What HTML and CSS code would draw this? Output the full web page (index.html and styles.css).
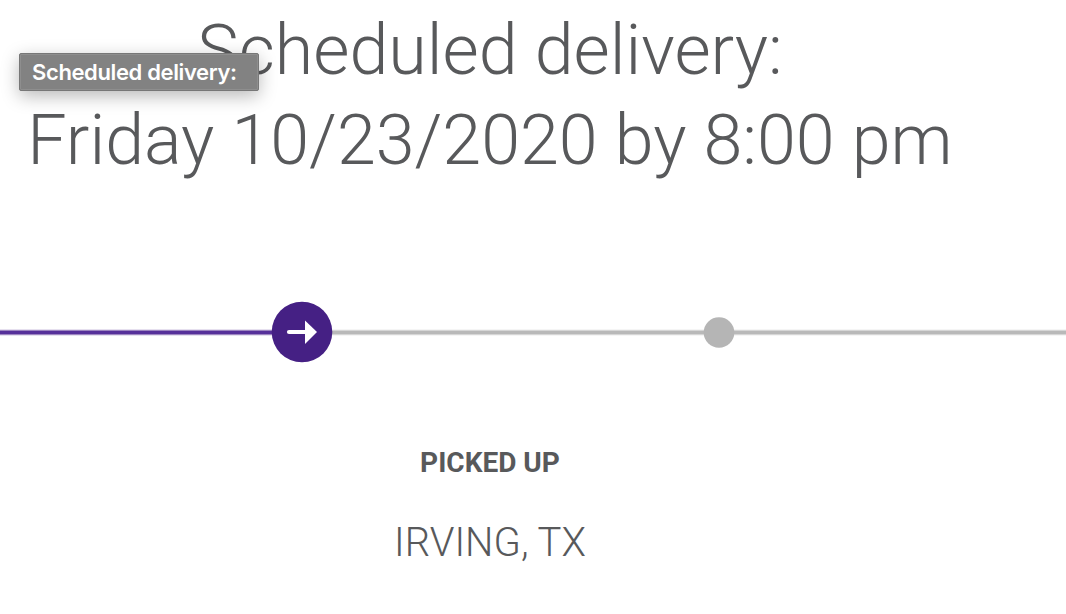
FILE: index.html
```html
<!DOCTYPE html>
<html lang="en">
<head>
    <meta charset="UTF-8">
    <meta name="viewport" content="width=device-width, initial-scale=1.0">
    <title>Scheduled delivery</title>
    <link rel="stylesheet" href="styles.css">
</head>
<body>
    <div class="container">
        <h1 class="delivery">
            <span class="delivery-label">Scheduled delivery:</span>
            <span class="delivery-date">Friday 10/23/2020 by 8:00 pm</span>
        </h1>
    </div>
    <svg class="progress" width="1066" height="62" viewBox="0 0 1066 62">
        <path d="M332 31.5H1066" stroke="#d6d6d6" stroke-width="5.4"/>
        <path d="M332 31.5H1066" stroke="#b9b9b9" stroke-width="3.2"/>
        <path d="M0 31.5H272" stroke="#9c85c0" stroke-width="5.4"/>
        <path d="M0 31.5H272" stroke="#56309a" stroke-width="3.2"/>
        <circle cx="302" cy="31" r="30.3" fill="#452084"/>
        <path d="M289 31h17" stroke="#fff" stroke-width="4.2" stroke-linecap="round"/>
        <path d="M305 19.5L317 31L305 43Z" fill="#fff"/>
        <circle cx="719" cy="31.5" r="15.3" fill="#b5b5b5"/>
    </svg>
    <div class="container">
        <div class="status">PICKED UP</div>
        <div class="location">IRVING, TX</div>
    </div>
    <div class="tooltip">Scheduled delivery:</div>
</body>
</html>
```
FILE: styles.css
```css
body {
    margin: 0;
    background: #fff;
    color: #58595b;
    font-family: Roboto, sans-serif;
    overflow: hidden;
}
.container {
    width: 980px;
    text-align: center;
}
.delivery {
    margin: 0;
    padding-top: 5px;
    font-size: 70px;
    font-weight: 300;
    line-height: 90px;
}
.delivery span {
    display: block;
    white-space: nowrap;
}
.progress {
    display: block;
    margin-top: 116px;
}
.status {
    margin-top: 84px;
    font-size: 28px;
    font-weight: 700;
    line-height: 32px;
}
.location {
    margin-top: 40px;
    font-size: 40px;
    font-weight: 300;
    line-height: 48px;
}
/* sits over the heading */
.tooltip {
    position: absolute;
    left: 19px;
    top: 53px;
    width: 240px;
    height: 38px;
    box-sizing: border-box;
    padding-left: 12px;
    border: 1px solid #777;
    border-radius: 2px;
    background: #828282;
    color: #fff;
    font: 600 22px/36px Inter, sans-serif;
    letter-spacing: -0.37px;
    white-space: nowrap;
    box-shadow: inset 0 0 0 1px #8e8e8e, 0 5px 18px rgba(0,0,0,0.28);
}
```
